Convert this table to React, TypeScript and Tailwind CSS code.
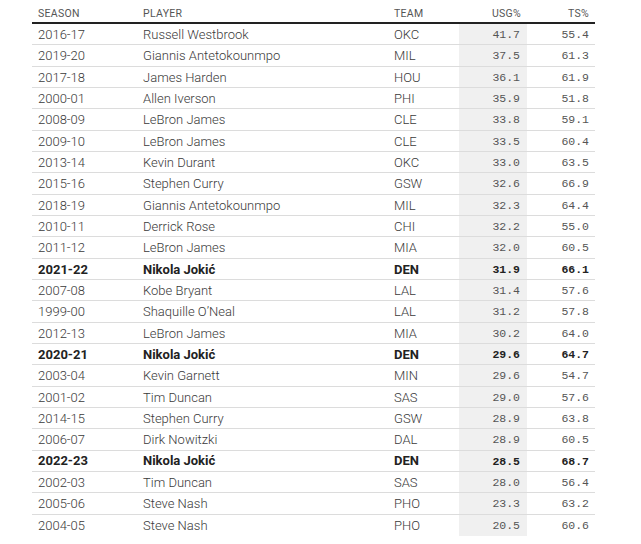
import React from "react";

type Row = [string, string, string, string, string, boolean?];

const rows: Row[] = [
  ["2016-17", "Russell Westbrook", "OKC", "41.7", "55.4"],
  ["2019-20", "Giannis Antetokounmpo", "MIL", "37.5", "61.3"],
  ["2017-18", "James Harden", "HOU", "36.1", "61.9"],
  ["2000-01", "Allen Iverson", "PHI", "35.9", "51.8"],
  ["2008-09", "LeBron James", "CLE", "33.8", "59.1"],
  ["2009-10", "LeBron James", "CLE", "33.5", "60.4"],
  ["2013-14", "Kevin Durant", "OKC", "33.0", "63.5"],
  ["2015-16", "Stephen Curry", "GSW", "32.6", "66.9"],
  ["2018-19", "Giannis Antetokounmpo", "MIL", "32.3", "64.4"],
  ["2010-11", "Derrick Rose", "CHI", "32.2", "55.0"],
  ["2011-12", "LeBron James", "MIA", "32.0", "60.5"],
  ["2021-22", "Nikola Jokić", "DEN", "31.9", "66.1", true],
  ["2007-08", "Kobe Bryant", "LAL", "31.4", "57.6"],
  ["1999-00", "Shaquille O’Neal", "LAL", "31.2", "57.8"],
  ["2012-13", "LeBron James", "MIA", "30.2", "64.0"],
  ["2020-21", "Nikola Jokić", "DEN", "29.6", "64.7", true],
  ["2003-04", "Kevin Garnett", "MIN", "29.6", "54.7"],
  ["2001-02", "Tim Duncan", "SAS", "29.0", "57.6"],
  ["2014-15", "Stephen Curry", "GSW", "28.9", "63.8"],
  ["2006-07", "Dirk Nowitzki", "DAL", "28.9", "60.5"],
  ["2022-23", "Nikola Jokić", "DEN", "28.5", "68.7", true],
  ["2002-03", "Tim Duncan", "SAS", "28.0", "56.4"],
  ["2005-06", "Steve Nash", "PHO", "23.3", "63.2"],
  ["2004-05", "Steve Nash", "PHO", "20.5", "60.6"],
];

const sans = "font-['Roboto','Liberation_Sans',sans-serif]";
const mono = "font-['Liberation_Mono','DejaVu_Sans_Mono',monospace]";

export default function App() {
  return (
    <div className="w-[641px] h-[544px] bg-white overflow-hidden">
      <div className="ml-[32px] w-[563px]">
        <div className={`flex h-[24px] items-end pb-[3px] leading-none border-b-2 border-[#222] text-[10.5px] tracking-[0.3px] text-[#555] ${sans}`}>
          <div className="w-[105px] pl-[6px]">SEASON</div>
          <div className="w-[251px] pl-[6px]">PLAYER</div>
          <div className="w-[71px] pl-[6px]">TEAM</div>
          <div className="w-[68px] pr-[6px] text-right">USG%</div>
          <div className="w-[68px] pr-[6px] text-right">TS%</div>
        </div>
        {rows.map((r, i) => {
          const bold = r[5];
          const last = i === rows.length - 1;
          const txt = bold ? "text-[#222] font-bold" : "text-[#3a3a3a] font-light";
          const num = bold ? "text-[#222] font-bold" : "text-[#555]";
          return (
            <div
              key={i}
              className={`flex h-[21.33px] items-center pt-[1px] ${last ? "" : "border-b border-[#dcdcdc]"}`}
            >
              <div className={`w-[105px] pl-[6px] text-[13px] ${txt} ${sans}`}>{r[0]}</div>
              <div className={`w-[251px] pl-[6px] text-[13px] ${txt} ${sans}`}>{r[1]}</div>
              <div className={`w-[71px] pl-[6px] text-[13px] ${txt} ${sans}`}>{r[2]}</div>
              <div className={`w-[68px] -mt-[1px] self-stretch flex items-center justify-end pt-[1px] pr-[7px] bg-[#f0f0f0] text-[11.5px] ${num} ${mono}`}>{r[3]}</div>
              <div className={`w-[68px] pr-[6px] text-right text-[11.5px] ${num} ${mono}`}>{r[4]}</div>
            </div>
          );
        })}
      </div>
    </div>
  );
}
